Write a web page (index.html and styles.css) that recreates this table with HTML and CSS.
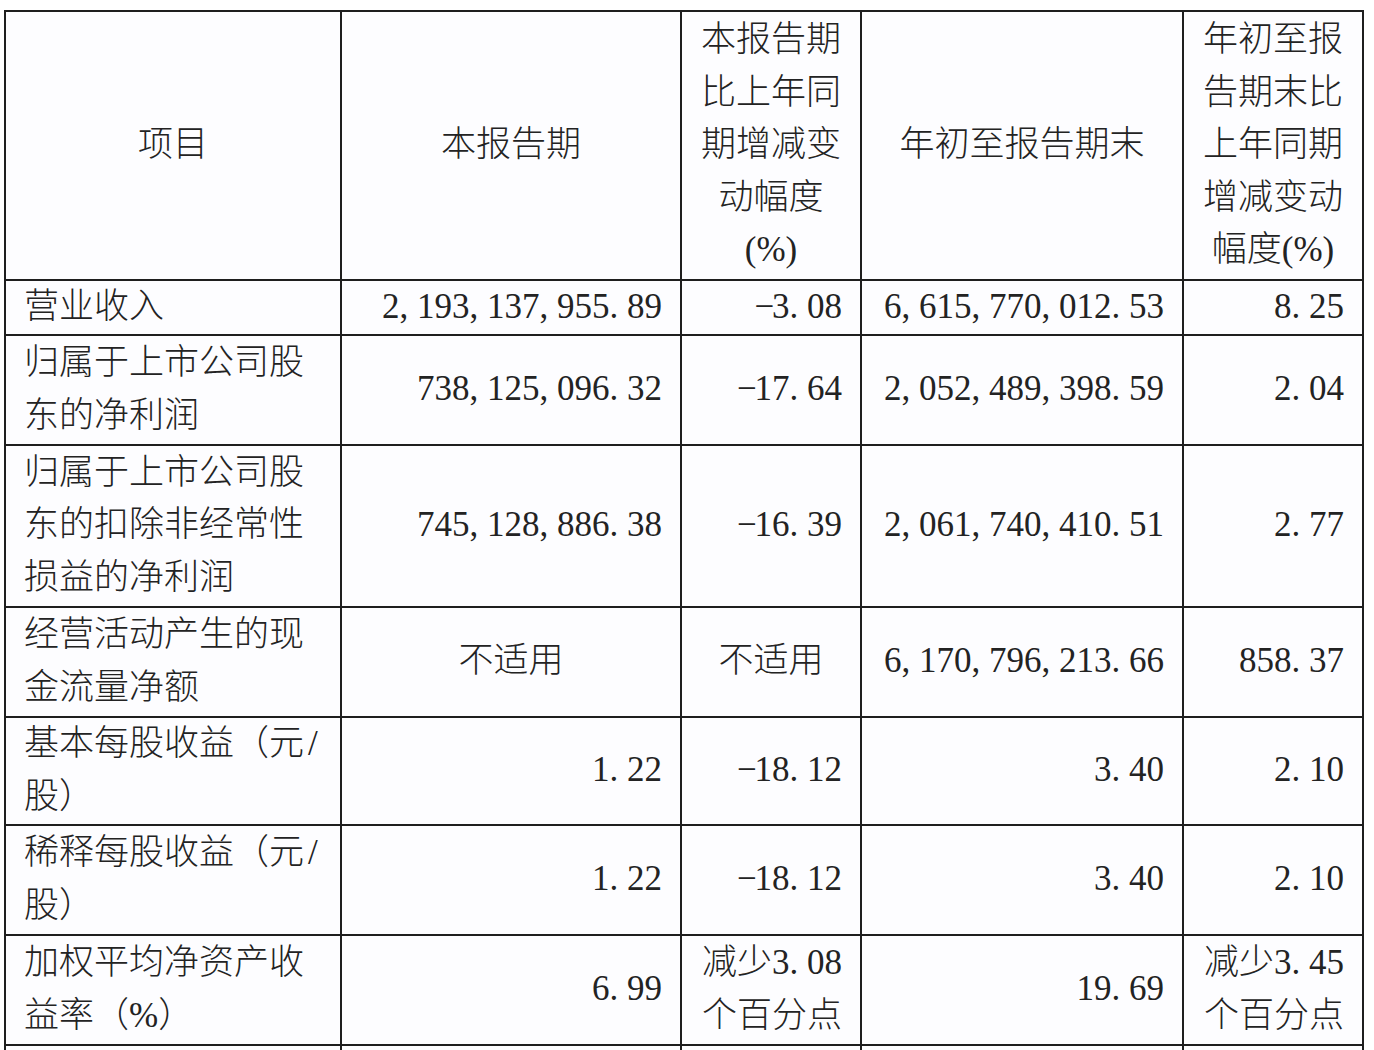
FILE: index.html
```html
<!DOCTYPE html>
<html lang="zh-CN">
<head>
<meta charset="utf-8">
<title>主要会计数据和财务指标</title>
<link rel="stylesheet" href="styles.css">
</head>
<body>
<div class="wrap">
<table class="fin">
  <colgroup>
    <col class="c1"><col class="c2"><col class="c3"><col class="c4"><col class="c5">
  </colgroup>
  <thead>
    <tr class="head">
      <th>项目</th>
      <th>本报告期</th>
      <th>本报告期<br>比上年同<br>期增减变<br>动幅度<br>(%)</th>
      <th>年初至报告期末</th>
      <th>年初至报<br>告期末比<br>上年同期<br>增减变动<br>幅度(%)</th>
    </tr>
  </thead>
  <tbody>
    <tr class="r1">
      <td class="item">营业收入</td>
      <td class="num">2<span class="p">,</span>193<span class="p">,</span>137<span class="p">,</span>955<span class="p">.</span>89</td>
      <td class="num"><span class="m">−</span>3<span class="p">.</span>08</td>
      <td class="num">6<span class="p">,</span>615<span class="p">,</span>770<span class="p">,</span>012<span class="p">.</span>53</td>
      <td class="num">8<span class="p">.</span>25</td>
    </tr>
    <tr class="r2">
      <td class="item">归属于上市公司股<br>东的净利润</td>
      <td class="num">738<span class="p">,</span>125<span class="p">,</span>096<span class="p">.</span>32</td>
      <td class="num"><span class="m">−</span>17<span class="p">.</span>64</td>
      <td class="num">2<span class="p">,</span>052<span class="p">,</span>489<span class="p">,</span>398<span class="p">.</span>59</td>
      <td class="num">2<span class="p">.</span>04</td>
    </tr>
    <tr class="r3">
      <td class="item">归属于上市公司股<br>东的扣除非经常性<br>损益的净利润</td>
      <td class="num">745<span class="p">,</span>128<span class="p">,</span>886<span class="p">.</span>38</td>
      <td class="num"><span class="m">−</span>16<span class="p">.</span>39</td>
      <td class="num">2<span class="p">,</span>061<span class="p">,</span>740<span class="p">,</span>410<span class="p">.</span>51</td>
      <td class="num">2<span class="p">.</span>77</td>
    </tr>
    <tr class="r2">
      <td class="item">经营活动产生的现<br>金流量净额</td>
      <td class="ctr">不适用</td>
      <td class="ctr">不适用</td>
      <td class="num">6<span class="p">,</span>170<span class="p">,</span>796<span class="p">,</span>213<span class="p">.</span>66</td>
      <td class="num">858<span class="p">.</span>37</td>
    </tr>
    <tr class="r5">
      <td class="item">基本每股收益（元<span class="sl">/</span><br>股）</td>
      <td class="num">1<span class="p">.</span>22</td>
      <td class="num"><span class="m">−</span>18<span class="p">.</span>12</td>
      <td class="num">3<span class="p">.</span>40</td>
      <td class="num">2<span class="p">.</span>10</td>
    </tr>
    <tr class="r2">
      <td class="item">稀释每股收益（元<span class="sl">/</span><br>股）</td>
      <td class="num">1<span class="p">.</span>22</td>
      <td class="num"><span class="m">−</span>18<span class="p">.</span>12</td>
      <td class="num">3<span class="p">.</span>40</td>
      <td class="num">2<span class="p">.</span>10</td>
    </tr>
    <tr class="r2">
      <td class="item">加权平均净资产收<br>益率（%）</td>
      <td class="num">6<span class="p">.</span>99</td>
      <td class="num">减少3<span class="p">.</span>08<br>个百分点</td>
      <td class="num">19<span class="p">.</span>69</td>
      <td class="num">减少3<span class="p">.</span>45<br>个百分点</td>
    </tr>
    <tr class="r2">
      <td class="item">&nbsp;</td>
      <td class="num">&nbsp;</td>
      <td class="num">&nbsp;</td>
      <td class="num">&nbsp;</td>
      <td class="num">&nbsp;</td>
    </tr>
  </tbody>
</table>
</div>
</body>
</html>
```

FILE: styles.css
```css
html, body {
  margin: 0;
  padding: 0;
  background: #ffffff;
}

.wrap {
  padding: 10px 0 0 4px;
}

.fin {
  border-collapse: collapse;
  table-layout: fixed;
  width: 1360px;
  font-family: "Liberation Serif", "Noto Sans CJK SC", serif;
  font-size: 35px;
  line-height: 52.5px;
  color: #232323;
  background: #fdfdff;
}

.c1 { width: 336px; }
.c2 { width: 340px; }
.c3 { width: 180px; }
.c4 { width: 322px; }
.c5 { width: 180px; }

.fin th,
.fin td {
  border: 2px solid #1e1e1e;
  padding: 0 18px;
  white-space: nowrap;
  vertical-align: middle;
  font-weight: 300;
}

.fin th {
  text-align: center;
}

.head th { height: 267px; }
.r1 td { height: 52px; }
.r2 td { height: 108px; }
.r3 td { height: 160px; }
.r5 td { height: 106px; }

.item {
  text-align: left;
}

.num {
  text-align: right;
}

.ctr {
  text-align: center;
}

.p {
  display: inline-block;
  width: 0.5em;
  text-align: left;
}

.sl {
  display: inline-block;
  width: 0.5em;
  text-align: center;
}

.m {
  display: inline-block;
  width: 0.5em;
  text-align: center;
}
```
